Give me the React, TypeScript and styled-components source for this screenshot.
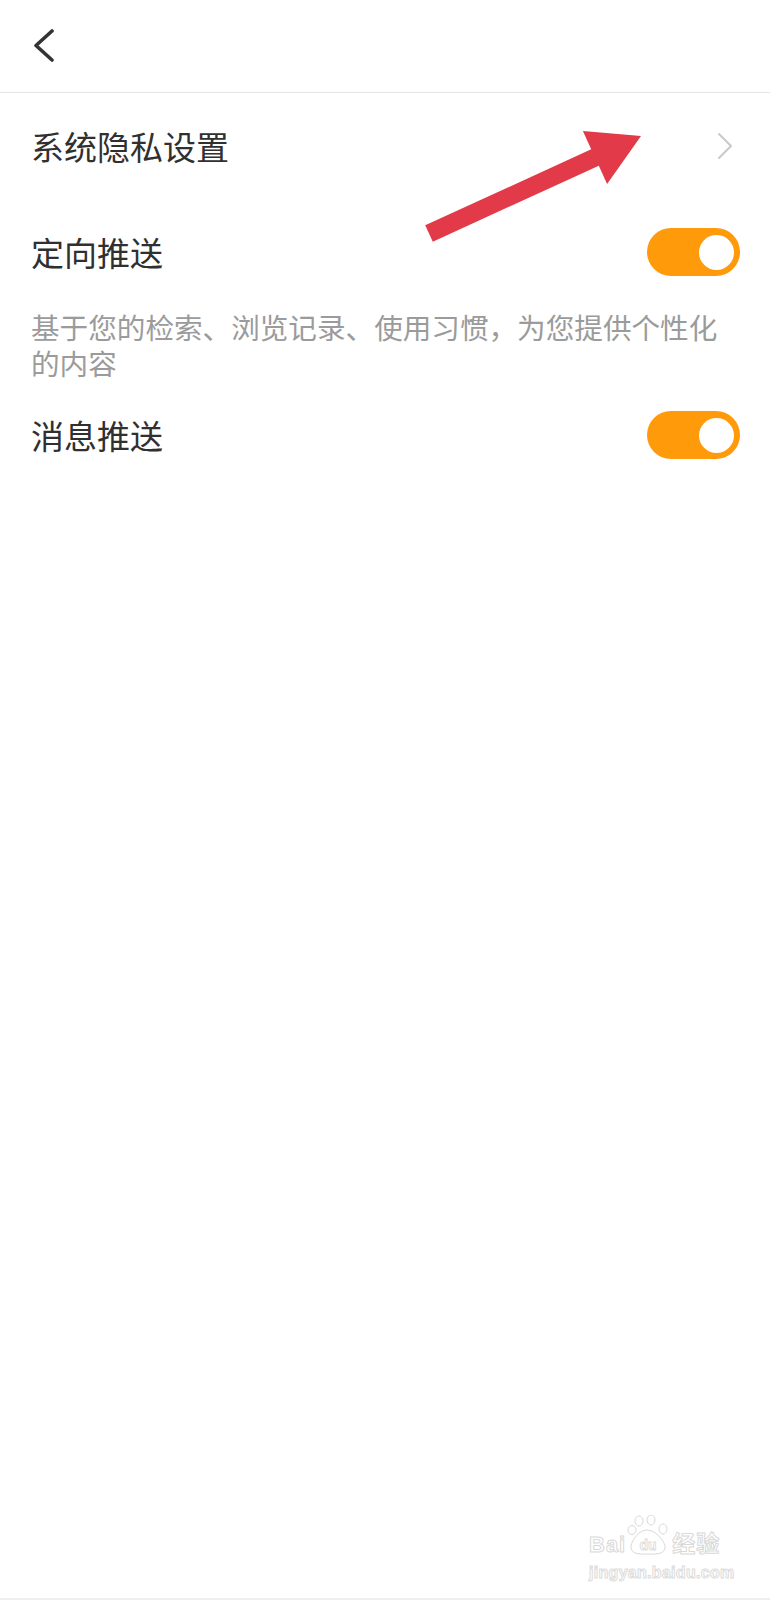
import React from "react";
import styled, { createGlobalStyle } from "styled-components";

const GlobalStyle = createGlobalStyle`
  html, body {
    margin: 0;
    padding: 0;
    background: #ffffff;
  }
  body {
    font-family: "Noto Sans CJK SC", "Noto Sans", sans-serif;
  }
`;

const Page = styled.div`
  position: relative;
  width: 770px;
  height: 1600px;
  display: flex;
  flex-direction: column;
  background: #ffffff;
  overflow: hidden;
`;

const Header = styled.header`
  height: 92px;
  display: flex;
  align-items: center;
  padding-left: 33px;
  border-bottom: 1px solid #e6e6e6;
  flex-shrink: 0;
`;

const BackButton = styled.button`
  border: 0;
  padding: 0;
  background: none;
  display: flex;
  cursor: pointer;
`;

const Row = styled.div<{ h: number }>`
  height: ${props => props.h}px;
  display: flex;
  align-items: center;
  justify-content: space-between;
  padding: 0 30px 0 31px;
  flex-shrink: 0;
`;

const Label = styled.span`
  font-size: 33px;
  line-height: 40px;
  color: #303030;
`;

const Chevron = styled.svg`
  margin-right: 7px;
`;

const Desc = styled.p`
  margin: 0;
  padding: 4px 32px 3px 31px;
  font-size: 28.6px;
  line-height: 36px;
  color: #9b9b9b;
`;

const Toggle = styled.div<{ on: boolean }>`
  width: 93px;
  height: 48px;
  border-radius: 24px;
  background: ${props => (props.on ? "#ff9a0b" : "#dcdcdc")};
  display: flex;
  align-items: center;
  justify-content: ${props => (props.on ? "flex-end" : "flex-start")};
  padding: 0 6px;
  box-sizing: border-box;
`;

const Knob = styled.span`
  width: 35px;
  height: 35px;
  border-radius: 50%;
  background: #ffffff;
`;

const Arrow = styled.svg`
  position: absolute;
  left: 0;
  top: 0;
  pointer-events: none;
`;

const Watermark = styled.div`
  position: absolute;
  left: 589px;
  top: 1515px;
  display: flex;
  flex-direction: column;
  align-items: flex-start;
`;

const MarkTop = styled.div`
  display: flex;
  align-items: flex-end;
  height: 41px;
`;

const MarkWord = styled.span<{ size: number }>`
  font-family: "Liberation Sans", Arial, "Noto Sans CJK SC", sans-serif;
  font-weight: 700;
  font-size: ${props => props.size}px;
  line-height: 1;
  color: #ffffff;
  -webkit-text-stroke: 1px #d9d9d9;
  letter-spacing: 1px;
`;

const MarkUrl = styled.span`
  font-family: "Liberation Sans", Arial, sans-serif;
  font-weight: 700;
  font-size: 16px;
  line-height: 1;
  margin-top: 9px;
  color: #ffffff;
  -webkit-text-stroke: 1px #dcdcdc;
  letter-spacing: 0.3px;
`;

const Bottom = styled.div`
  margin-top: auto;
  height: 2px;
  background: #efefef;
`;

const Switch = ({ on }: { on: boolean }) => (
  <Toggle on={on}>
    <Knob />
  </Toggle>
);

export default function App() {
  return (
    <Page>
      <GlobalStyle />
      <Header>
        <BackButton aria-label="back">
          <svg width="22" height="34" viewBox="0 0 22 34">
            <polyline
              points="19,2 3,16.5 19,31"
              fill="none"
              stroke="#333"
              strokeWidth="3.6"
              strokeLinecap="round"
              strokeLinejoin="round"
            />
          </svg>
        </BackButton>
      </Header>

      <Row h={106}>
        <Label>系统隐私设置</Label>
        <Chevron width="16" height="28" viewBox="0 0 16 28">
          <polyline
            points="2,2 14,14 2,26"
            fill="none"
            stroke="#c9c9c9"
            strokeWidth="2"
            strokeLinecap="round"
            strokeLinejoin="round"
          />
        </Chevron>
      </Row>

      <Row h={106}>
        <Label>定向推送</Label>
        <Switch on />
      </Row>
      <Desc>基于您的检索、浏览记录、使用习惯，为您提供个性化的内容</Desc>

      <Row h={102}>
        <Label>消息推送</Label>
        <Switch on />
      </Row>

      <Bottom />

      <Arrow width="770" height="300" viewBox="0 0 770 300">
        <polygon
          points="425.2,225.3 591.2,149.3 582.9,131.1 641,136 607.1,183.9 598.8,165.7 432.8,241.7"
          fill="#e23a48"
        />
      </Arrow>

      <Watermark>
        <MarkTop>
          <MarkWord size={22}>Bai</MarkWord>
          <svg width="46" height="41" viewBox="0 0 46 41">
            <g fill="#fff" stroke="#d9d9d9" strokeWidth="1">
              <ellipse cx="13" cy="6" rx="4" ry="5" />
              <ellipse cx="25" cy="5" rx="4" ry="5" />
              <ellipse cx="6" cy="15" rx="4" ry="4.5" />
              <ellipse cx="37" cy="14" rx="4" ry="5" />
              <path d="M21 15 C13 15 6 25 5 31 C4 37 10 40 22 39 C34 40 40 37 39 31 C38 25 29 15 21 15 Z" />
            </g>
            <text
              x="22"
              y="35"
              textAnchor="middle"
              fontFamily="Liberation Sans, Arial, sans-serif"
              fontWeight="700"
              fontSize="14"
              fill="#fff"
              stroke="#d9d9d9"
              strokeWidth="0.8"
            >
              du
            </text>
          </svg>
          <MarkWord size={23}>经验</MarkWord>
        </MarkTop>
        <MarkUrl>jingyan.baidu.com</MarkUrl>
      </Watermark>
    </Page>
  );
}
